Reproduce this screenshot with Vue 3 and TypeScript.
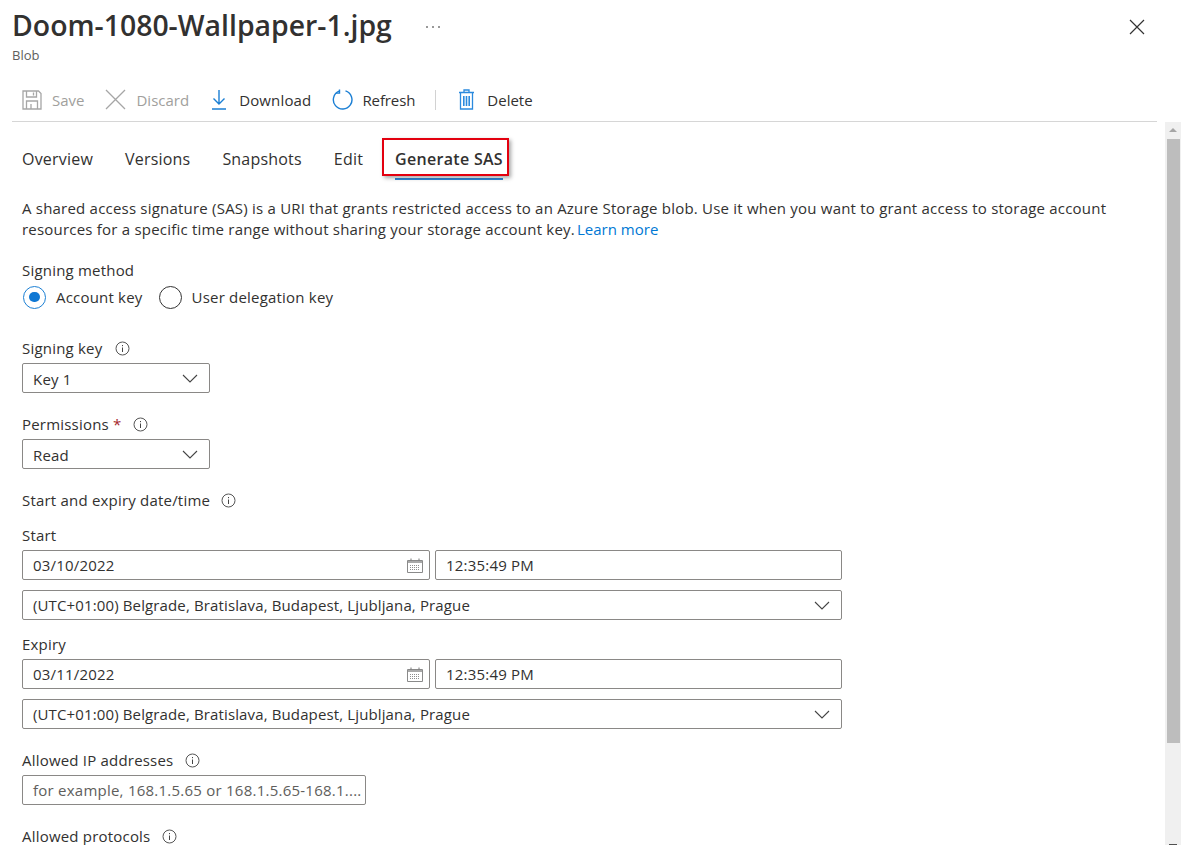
<script setup lang="ts">
const tabs = ['Overview', 'Versions', 'Snapshots', 'Edit', 'Generate SAS']
const timezone = '(UTC+01:00) Belgrade, Bratislava, Budapest, Ljubljana, Prague'

const windows = [
  { label: 'Start', date: '03/10/2022', time: '12:35:49 PM' },
  { label: 'Expiry', date: '03/11/2022', time: '12:35:49 PM' }
]
</script>

<template>
  <div class="page">
    <div class="blade">
      <header class="head">
        <div class="title-row">
          <h1>Doom-1080-Wallpaper-1.jpg</h1>
          <span class="more"><i></i><i></i><i></i></span>
          <svg class="close" width="16" height="16" viewBox="0 0 16 16">
            <path d="M1 1l14 14M15 1L1 15" stroke="#333" stroke-width="1.2" fill="none" />
          </svg>
        </div>
        <div class="subtitle">Blob</div>
      </header>

      <div class="toolbar">
        <span class="cmd off cmd-save">
          <svg width="20" height="20" viewBox="0 0 20 20" fill="none" stroke="#a6a6a6" stroke-width="1.3">
            <path d="M1 1h15.5L19 3.5V19H1z" />
            <path d="M4.5 1v6h10V1M4.5 19v-8h11v8M9 14v5M11.5 2.5v3" />
          </svg>
          Save
        </span>
        <span class="cmd off cmd-discard">
          <svg width="21" height="21" viewBox="0 0 21 21" fill="none" stroke="#a6a6a6" stroke-width="1.3">
            <path d="M1 1l19 19M20 1L1 20" />
          </svg>
          Discard
        </span>
        <span class="cmd cmd-download">
          <svg width="16" height="21" viewBox="0 0 16 21" fill="none" stroke="#1b7fd4" stroke-width="1.4">
            <path d="M8 1v14M2.5 9.5L8 15l5.5-5.5M1 20h14" />
          </svg>
          Download
        </span>
        <span class="cmd cmd-refresh">
          <svg width="21" height="21" viewBox="0 0 21 21" fill="none" stroke="#1b7fd4" stroke-width="1.4">
            <path d="M7 2.2A9.3 9.3 0 1 0 13.5 1.9" />
            <path d="M7.5 0.5v3.6H3.8" />
          </svg>
          Refresh
        </span>
        <span class="sep"></span>
        <span class="cmd cmd-delete">
          <svg width="17" height="21" viewBox="0 0 17 21" fill="none" stroke="#2b8ade" stroke-width="1.3">
            <path d="M1 3.5h15M6 3.5V1h5v2.5M2.5 3.5V20h12V3.5" />
            <path d="M5.8 7v10M8.5 7v10M11.2 7v10" stroke-width="1.6" />
          </svg>
          Delete
        </span>
      </div>

      <nav class="tabs">
        <span v-for="tab in tabs" :key="tab" class="tab" :class="{ active: tab === 'Generate SAS' }">
          {{ tab }}
          <i v-if="tab === 'Generate SAS'" class="callout"></i>
        </span>
      </nav>

      <p class="intro">
        A shared access signature (SAS) is a URI that grants restricted access to an Azure Storage blob. Use it when you want to grant access to storage account<br />
        resources for a specific time range without sharing your storage account key. <a>Learn more</a>
      </p>

      <div class="label method-label">Signing method</div>
      <div class="radios">
        <span class="radio checked"></span>
        <span class="radio-text">Account key</span>
        <span class="radio"></span>
        <span class="radio-text">User delegation key</span>
      </div>

      <div class="label key-label">
        Signing key
        <svg class="info" width="15" height="15" viewBox="0 0 15 15"><use href="#info-icon" /></svg>
      </div>
      <div class="field select narrow">
        Key 1
        <svg class="chev" width="16" height="9" viewBox="0 0 16 9"><path d="M1 1l7 7 7-7" /></svg>
      </div>

      <div class="label perm-label">
        Permissions <b class="req">*</b>
        <svg class="info" width="15" height="15" viewBox="0 0 15 15"><use href="#info-icon" /></svg>
      </div>
      <div class="field select narrow">
        Read
        <svg class="chev" width="16" height="9" viewBox="0 0 16 9"><path d="M1 1l7 7 7-7" /></svg>
      </div>

      <div class="label range-label">
        Start and expiry date/time
        <svg class="info" width="15" height="15" viewBox="0 0 15 15"><use href="#info-icon" /></svg>
      </div>

      <section v-for="w in windows" :key="w.label" class="window">
        <div class="label window-label">{{ w.label }}</div>
        <div class="date-row">
          <div class="field date">
            {{ w.date }}
            <svg class="cal" width="16" height="15" viewBox="0 0 16 15" fill="none">
              <path d="M.5 2.5h15v12H.5z" stroke="#8a8a8a" />
              <path d="M1 3h14v2H1z" fill="#a8a8a8" />
              <path d="M4 .5v2M12 .5v2" stroke="#777" />
              <path d="M3 7.5h10M3 9.5h10M3 11.5h10" stroke="#8e8e8e" stroke-dasharray="1 1" />
            </svg>
          </div>
          <div class="field time">{{ w.time }}</div>
        </div>
        <div class="field select wide">
          {{ timezone }}
          <svg class="chev" width="16" height="9" viewBox="0 0 16 9"><path d="M1 1l7 7 7-7" /></svg>
        </div>
      </section>

      <div class="label ip-label">
        Allowed IP addresses
        <svg class="info" width="15" height="15" viewBox="0 0 15 15"><use href="#info-icon" /></svg>
      </div>
      <div class="field ip placeholder">for example, 168.1.5.65 or 168.1.5.65-168.1....</div>

      <div class="label proto-label">
        Allowed protocols
        <svg class="info" width="15" height="15" viewBox="0 0 15 15"><use href="#info-icon" /></svg>
      </div>
    </div>

    <div class="scrollbar">
      <span class="arrow up"></span>
      <span class="thumb"></span>
      <span class="arrow down"></span>
    </div>

    <svg width="0" height="0" class="defs">
      <symbol id="info-icon" viewBox="0 0 15 15">
        <circle cx="7.5" cy="7.5" r="6.5" fill="none" stroke="#555" />
        <path d="M7.5 6.5v4.5" stroke="#444" />
        <path d="M7.5 4v1.2" stroke="#444" />
      </symbol>
    </svg>
  </div>
</template>

<style>
html,
body {
  margin: 0;
  background: #fff;
  overflow: hidden;
}
</style>

<style scoped>
.page {
  display: flex;
  height: 845px;
  overflow: hidden;
  font-family: 'Open Sans', 'Noto Sans', sans-serif;
  font-size: 15px;
  letter-spacing: 0.2px;
  color: #323130;
  background: #fff;
}

.defs {
  position: absolute;
}

.blade {
  flex: 1;
  min-width: 0;
  padding-left: 12px;
}

.title-row {
  display: flex;
  align-items: center;
  height: 44px;
  padding-top: 6px;
  box-sizing: border-box;
}

h1 {
  margin: 0;
  font-size: 28.4px;
  font-weight: 600;
  letter-spacing: 0;
  line-height: 40px;
  white-space: nowrap;
}

.more {
  display: flex;
  gap: 4px;
  margin-left: 34px;
  margin-top: 3px;
}

.more i {
  width: 2px;
  height: 2px;
  background: #777;
  border-radius: 50%;
}

.close {
  margin-left: auto;
  margin-right: 20px;
  margin-top: 4px;
}

.subtitle {
  font-size: 13px;
  line-height: 18px;
  color: #605e5c;
  margin-top: 2px;
  letter-spacing: 0;
}

.toolbar {
  display: flex;
  align-items: center;
  height: 58px;
  margin-right: 8px;
  padding-left: 10px;
  padding-top: 14px;
  border-bottom: 1px solid #d6d6d6;
  box-sizing: border-box;
  letter-spacing: 0;
}

.cmd {
  display: flex;
  align-items: center;
  white-space: nowrap;
  gap: 10px;
}

.cmd.off {
  color: #a19f9d;
}

.cmd-discard {
  margin-left: 21px;
}

.cmd-download {
  margin-left: 22px;
  gap: 12px;
  letter-spacing: 0.15px;
}

.cmd-refresh {
  margin-left: 21px;
  gap: 9px;
  letter-spacing: -0.1px;
}

.sep {
  width: 1px;
  height: 20px;
  background: #d2d2d2;
  margin: 0 22px 0 20px;
}

.cmd-delete {
  gap: 12px;
}

.tabs {
  display: flex;
  gap: 32px;
  padding-left: 10px;
  height: 58px;
  box-sizing: border-box;
  padding-top: 24px;
}

.tab {
  position: relative;
  height: 34px;
  font-size: 16px;
  letter-spacing: 0.2px;
  line-height: 26px;
  white-space: nowrap;
}

.tab.active {
  font-weight: 600;
  letter-spacing: 0.3px;
  border-bottom: 2px solid #2f86d6;
  height: 32px;
}

.callout {
  position: absolute;
  left: -13px;
  right: -6px;
  top: -8px;
  height: 38px;
  border: 2px solid #e3000f;
  box-sizing: border-box;
  box-shadow: 2px 2px 4px rgba(0, 0, 0, 0.35);
}

.intro {
  margin: 18px 0 0 10px;
  line-height: 21px;
  white-space: nowrap;
  letter-spacing: 0.21px;
}

.intro a {
  color: #0078d4;
  letter-spacing: 0;
  margin-left: -2px;
}

.label {
  display: flex;
  align-items: center;
  height: 20px;
  margin-left: 10px;
  white-space: nowrap;
}

.info {
  margin-left: 12px;
}

.key-label .info {
  margin-left: 13px;
}

.range-label .info {
  margin-left: 11px;
}

.req {
  color: #a4262c;
  font-weight: 400;
  margin-left: 4px;
}

.method-label {
  margin-top: 20px;
}

.radios {
  display: flex;
  align-items: center;
  height: 24px;
  margin: 5px 0 0 11px;
}

.radio {
  width: 23px;
  height: 23px;
  border: 1.3px solid #333;
  border-radius: 50%;
  box-sizing: border-box;
  position: relative;
}

.radio.checked {
  border-color: #1b7fd4;
}

.radio.checked::after {
  content: '';
  position: absolute;
  left: 5px;
  top: 5px;
  width: 10.5px;
  height: 10.5px;
  border-radius: 50%;
  background: #0f78d4;
}

.radio-text {
  margin: 0 16px 0 10px;
}

.key-label {
  margin-top: 29px;
}

.perm-label {
  margin-top: 21px;
}

.range-label {
  margin-top: 21px;
}

.field {
  position: relative;
  display: flex;
  align-items: center;
  height: 30px;
  margin-left: 10px;
  padding-left: 10px;
  border: 1px solid #8a8886;
  border-radius: 2px;
  box-sizing: border-box;
  white-space: nowrap;
}

.key-label + .field,
.perm-label + .field {
  margin-top: 5px;
}

.narrow {
  width: 188px;
  padding-top: 1px;
}

.wide {
  width: 820px;
  margin-top: 10px;
  letter-spacing: 0.13px;
}

.chev {
  position: absolute;
  right: 11px;
  top: 10px;
  fill: none;
  stroke: #444;
  stroke-width: 1.1;
}

.window-label {
  margin-top: 15px;
}

.window + .window .window-label {
  margin-top: 14px;
}

.date-row {
  display: flex;
  gap: 5px;
  margin: 5px 0 0 10px;
  width: 820px;
}

.date-row .field {
  margin-left: 0;
}

.date {
  width: 408px;
  flex: none;
}

.cal {
  position: absolute;
  right: 6px;
  top: 7px;
}

.time {
  flex: 1;
}

.ip-label {
  margin-top: 21px;
}

.ip {
  width: 344px;
  margin-top: 5px;
  letter-spacing: 0.24px;
}

.placeholder {
  color: #605e5c;
}

.proto-label {
  margin-top: 21px;
}

.scrollbar {
  flex: none;
  width: 16px;
  margin-top: 122px;
  background: #f0f0f0;
  display: flex;
  flex-direction: column;
  align-items: center;
  position: relative;
}

.arrow {
  width: 0;
  height: 0;
  border-left: 4px solid transparent;
  border-right: 4px solid transparent;
}

.arrow.up {
  margin-top: 6px;
  border-bottom: 4px solid #a6a6a6;
}

.thumb {
  width: 13px;
  height: 604px;
  margin-top: 7px;
  margin-left: 1px;
  background: #bdbdbd;
}

.arrow.down {
  position: absolute;
  bottom: 0;
  height: 1px;
  width: 8px;
  border: 0;
  background: #505050;
}
</style>
